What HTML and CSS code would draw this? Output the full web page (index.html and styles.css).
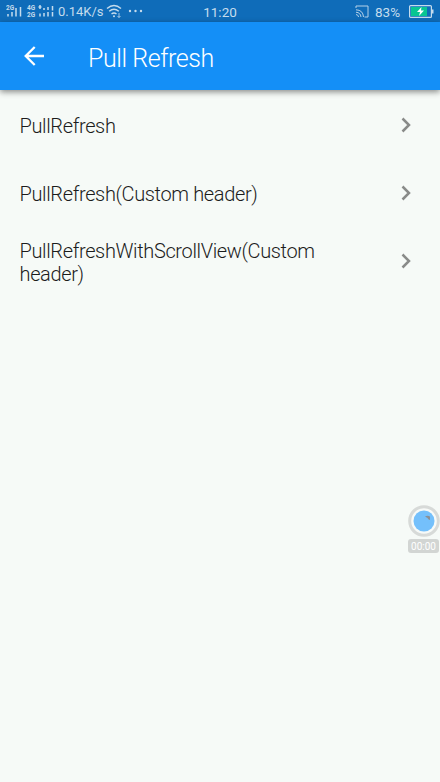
FILE: index.html
```html
<!DOCTYPE html>
<html lang="en">
<head>
<meta charset="utf-8">
<title>Pull Refresh</title>
<link rel="stylesheet" href="styles.css">
</head>
<body>
<div class="status">
  <div class="status-left">
    <svg class="signals" width="50" height="22" viewBox="0 0 50 22">
      <path d="M2 14v2.500M6 12v4.500M10 8v8.500M14.500 7v9.500M34 5v4M32.500 7h3M34 13.500v3M38 8v2M38 13v3.500M42 7v3M42 12v4.500M46.500 6v4.500M46.500 12v4.500" stroke="#c5dced" stroke-width="1.500"/>
      <g class="tiny"><text x="0" y="10">2G</text><text x="21" y="9.700">4G</text><text x="21" y="17.200">2G</text></g>
    </svg>
    <span class="speed">0.14K/s</span>
    <svg class="wifi" width="16" height="16" viewBox="0 0 16 16" fill="none" stroke="#c5dced" stroke-width="1.400">
      <path d="M1 5.500q7-6 14 0M3.200 8.300q4.800-4 9.600 0M5.500 11q2.500-2 5 0"/><circle cx="8" cy="13.300" r="1" fill="#c5dced" stroke="none"/><path d="M13 10v4.500M11.500 13l1.500 1.500 1.500-1.500" stroke-width=".8"/>
    </svg>
    <svg class="dots" width="15" height="4" viewBox="0 0 15 4" fill="#c5dced"><circle cx="2" cy="2" r="1.200"/><circle cx="7.500" cy="2" r="1.200"/><circle cx="13" cy="2" r="1.200"/></svg>
  </div>
  <span class="clock">11:20</span>
  <div class="status-right">
    <svg width="14" height="13" viewBox="0 0 14 13" fill="none" stroke="#b5d1e8" stroke-width="1"><path d="M1 3V1h12v11H9.500M1 4.800q7 .2 7.500 7.200M1 7.200q4.500.3 5 4.800M1 9.500q2.300.2 2.600 2.500"/></svg>
    <span class="percent">83%</span>
    <svg class="battery" width="25" height="13" viewBox="0 0 25 13"><rect x=".6" y=".6" width="21.800" height="11.800" rx="1" fill="none" stroke="#c5dced" stroke-width="1.200"/><path d="M2 2h16v9H2z" fill="#08c592"/><path d="M23 4.500h1.500v4H23z" fill="#c5dced"/><path d="M12.500 2L8 7h3l-1 4 5-5.500h-3z" fill="#fff"/></svg>
  </div>
</div>
<header class="bar">
  <svg class="back" width="20" height="20" viewBox="0 0 20 20" fill="none" stroke="#fff" stroke-width="2.300"><path d="M20 10H2M10.700 1L1.700 10l9 9"/></svg>
  <h1>Pull Refresh</h1>
</header>
<main class="list">
  <div class="row"><span class="label">PullRefresh</span><svg class="chev" width="10" height="16" viewBox="0 0 10 16"><path d="M1.500 1.500L8 8l-6.500 6.500"/></svg></div>
  <div class="row"><span class="label">PullRefresh(Custom header)</span><svg class="chev" width="10" height="16" viewBox="0 0 10 16"><path d="M1.500 1.500L8 8l-6.500 6.500"/></svg></div>
  <div class="row"><span class="label">PullRefreshWithScrollView(Custom<br>header)</span><svg class="chev" width="10" height="16" viewBox="0 0 10 16"><path d="M1.500 1.500L8 8l-6.500 6.500"/></svg></div>
</main>
<div class="recorder">
  <svg width="32" height="32" viewBox="0 0 32 32"><circle cx="16" cy="16" r="14.300" fill="#f7faf8" stroke="#d7dad8" stroke-width="3"/><circle cx="16" cy="16" r="10.500" fill="#74c0fb"/><path d="M17 11.500q2.500-1.500 5 0v3.500q-2-.3-2.500-2z" fill="#8b8f94"/></svg>
  <span class="timer">00:00</span>
</div>
</body>
</html>
```

FILE: styles.css
```css
* { box-sizing: border-box; }
body {
  margin: 0;
  height: 782px;
  overflow: hidden;
  background: #f6faf7;
  font-family: Roboto, "Liberation Sans", sans-serif;
  font-weight: 300;
  color: #1c1c1c;
}
.status {
  height: 22px;
  display: grid;
  grid-template-columns: 200px 40px 200px;
  align-items: center;
  background: #0f6cb9;
  color: #c5dced;
  font-size: 13px;
  font-weight: 400;
  line-height: 22px;
}
.status-left, .status-right { display: flex; align-items: center; height: 22px; }
.status-left { padding-left: 6px; }
.signals { flex: none; }
.tiny { font-size: 6.5px; font-weight: 700; fill: #c5dced; }
.speed { width: 47px; margin-left: 2px; padding-top: 1px; letter-spacing: 0; white-space: nowrap; }
.wifi { margin-left: 1px; }
.dots { margin-left: 6px; }
.clock { height: 22px; line-height: 24px; text-align: center; font-size: 13.5px; }
.status-right { justify-content: flex-end; padding-right: 6px; }
.percent { margin: 0 7px 0 6px; padding-top: 1px; width: 27px; font-size: 13.5px; white-space: nowrap; }
.bar {
  position: relative;
  height: 68px;
  display: flex;
  align-items: center;
  padding-left: 24px;
  background: #148ff7;
  box-shadow: 0 2px 6px rgba(0, 0, 0, .45);
}
h1 {
  margin: 6px 0 0 44px;
  font-size: 25px;
  font-weight: 300;
  line-height: 32px;
  letter-spacing: -.43px;
  color: #fff;
}
.list { padding-top: 1px; }
.row {
  display: flex;
  align-items: center;
  justify-content: space-between;
  height: 68.400px;
  padding: 0 29px 0 19.500px;
}
.label { font-size: 20px; line-height: 23px; letter-spacing: -.36px; white-space: nowrap; padding-top: 2px; }
.chev { fill: none; stroke: #898b89; stroke-width: 2.5; margin-bottom: 1px; }
.recorder {
  position: absolute;
  left: 408px;
  top: 505px;
  width: 32px;
  display: flex;
  flex-direction: column;
  align-items: center;
}
.timer {
  width: 31px;
  height: 14px;
  margin: 2px 1px 0 0;
  border-radius: 3px;
  background: #d2d5d3;
  color: #fff;
  font-size: 10px;
  font-weight: 400;
  line-height: 15px;
  text-align: center;
}
```
